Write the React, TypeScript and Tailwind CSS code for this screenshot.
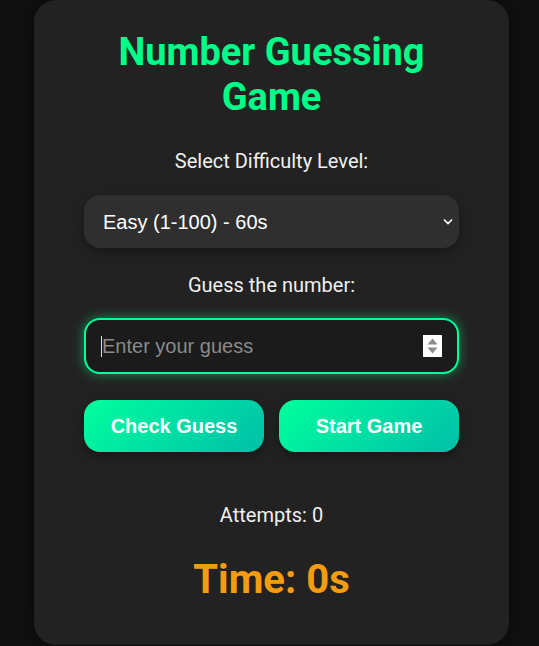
import React, { useState } from 'react';

const App: React.FC = () => {
    const [level, setLevel] = useState('easy');
    const [guess, setGuess] = useState('');
    const attempts = 0;
    const time = 0;

    return (
        <div className="min-h-screen bg-[#111111] flex justify-center pl-[4px] font-['Roboto',sans-serif]">
            <div className="w-[475px] h-[645px] bg-[#222222] rounded-[22px] shadow-[0_0_30px_rgba(0,0,0,0.6)] px-[50px] pt-[30px] flex flex-col items-center text-white">
                <h1 className="text-[38px] leading-[45px] font-bold text-[#00ff88] text-center w-[340px]">
                    Number Guessing Game
                </h1>

                <label className="mt-[26px] text-[20px] leading-[30px] text-[#f0f0f0]">Select Difficulty Level:</label>
                <div className="relative w-full mt-[19px]">
                    <select
                        value={level}
                        onChange={(e) => setLevel(e.target.value)}
                        className="appearance-none w-full h-[53px] rounded-[16px] bg-[#2f2f2f] pl-[19px] pr-10 text-[20px] text-white font-['Liberation_Sans',Arial,sans-serif] shadow-[0_4px_12px_rgba(0,0,0,0.35)] outline-none"
                    >
                        <option value="easy">Easy (1-100) - 60s</option>
                        <option value="medium">Medium (1-500) - 45s</option>
                        <option value="hard">Hard (1-1000) - 30s</option>
                    </select>
                    <svg className="absolute right-[6px] top-[23px] pointer-events-none" width="10" height="7" viewBox="0 0 10 7" fill="none">
                        <path d="M1 1.5l4 4 4-4" stroke="#ffffff" strokeWidth="1.6" />
                    </svg>
                </div>

                <label className="mt-[22px] text-[20px] leading-[30px] text-[#f0f0f0]">Guess the number:</label>
                <div className="relative w-full mt-[18px]">
                    <input
                        type="number"
                        value={guess}
                        onChange={(e) => setGuess(e.target.value)}
                        placeholder="Enter your guess"
                        className="w-full h-[56px] rounded-[16px] bg-[#1b1b1b] border-2 border-[#00ff99] pl-[16px] pr-10 text-[20px] text-white placeholder:text-[#8a8a8a] font-['Liberation_Sans',Arial,sans-serif] shadow-[0_0_12px_rgba(0,255,136,0.5)] outline-none [appearance:textfield] [&::-webkit-inner-spin-button]:appearance-none"
                    />
                    {/* caret + spinner of the focused number field */}
                    <span className="absolute left-[17px] top-[18px] w-px h-[21px] bg-[#dddddd] pointer-events-none" />
                    <span className="absolute right-[17px] top-[17px] w-[19px] h-[22px] bg-white flex flex-col items-center justify-center gap-[2px] pointer-events-none">
                        <svg width="11" height="7" viewBox="0 0 11 7"><path d="M5.5 0.5L10.5 6.5H0.5Z" fill="#8c8c8c" /></svg>
                        <svg width="11" height="7" viewBox="0 0 11 7"><path d="M0.5 0.5H10.5L5.5 6.5Z" fill="#8c8c8c" /></svg>
                    </span>
                </div>

                <div className="w-full mt-[26px] flex gap-[15px]">
                    <button className="flex-1 h-[52px] rounded-[16px] bg-linear-135 from-[#00ff9c] to-[#00bfa8] text-white text-[20px] font-bold font-['Liberation_Sans',Arial,sans-serif] shadow-[0_4px_12px_rgba(0,0,0,0.35)]">
                        Check Guess
                    </button>
                    <button className="flex-1 h-[52px] rounded-[16px] bg-linear-135 from-[#00ff9c] to-[#00bfa8] text-white text-[20px] font-bold font-['Liberation_Sans',Arial,sans-serif] shadow-[0_4px_12px_rgba(0,0,0,0.35)]">
                        Start Game
                    </button>
                </div>

                <p className="mt-[48px] text-[20px] leading-[30px] text-[#f0f0f0]">Attempts: {attempts}</p>
                <p className="mt-[25px] text-[40px] leading-[50px] font-bold text-[#f39c12]">Time: {time}s</p>
            </div>
        </div>
    );
};

export default App;
